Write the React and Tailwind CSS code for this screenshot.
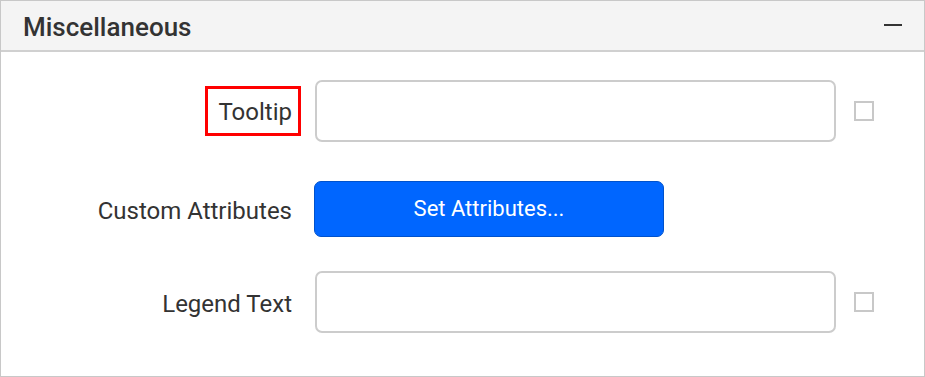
export default function App() {
  const font = { fontFamily: "Roboto, 'Noto Sans', sans-serif" };
  return (
    <div className="w-[925px] h-[377px] bg-white border border-[#c8c8c8] flex flex-col text-[#333333]" style={font}>
      <div className="h-[51px] shrink-0 bg-[#f4f4f4] border-b-2 border-[#d0d0d0] flex items-center justify-between pl-[22px] pr-[22px]">
        <span className="text-[26px] font-medium leading-none text-[#333333] mt-[3px]">Miscellaneous</span>
        <span className="block w-[18px] h-[2px] bg-[#333333] mt-[-1px]"></span>
      </div>
      <div className="flex flex-col pt-[28px]">
        <div className="flex items-center h-[62px]">
          <div className="w-[300px] flex justify-end">
            <span className="inline-flex items-center h-[50px] border-[3px] border-[#ff0000] pl-[10px] pr-[6px] text-[24px] leading-none pt-[2px]">Tooltip</span>
          </div>
          <div className="ml-[14px] w-[521px] h-[62px] border-2 border-[#cccccc] rounded-[7px] bg-white"></div>
          <div className="ml-[18px] w-[20px] h-[20px] border-2 border-[#c8c8c8] bg-white"></div>
        </div>
        <div className="flex items-center h-[56px] mt-[39px]">
          <div className="w-[300px] text-right pr-[9px] text-[24px] leading-none pt-[4px]">Custom Attributes</div>
          <button className="ml-[13px] w-[350px] h-[56px] rounded-[7px] bg-[#0066ff] border border-[#0052cc] text-white text-[22px] leading-none">Set Attributes...</button>
        </div>
        <div className="flex items-center h-[62px] mt-[34px]">
          <div className="w-[300px] text-right pr-[9px] text-[24px] leading-none pt-[3px]">Legend Text</div>
          <div className="ml-[14px] w-[521px] h-[62px] border-2 border-[#cccccc] rounded-[7px] bg-white"></div>
          <div className="ml-[18px] w-[20px] h-[20px] border-2 border-[#c8c8c8] bg-white"></div>
        </div>
      </div>
    </div>
  );
}
